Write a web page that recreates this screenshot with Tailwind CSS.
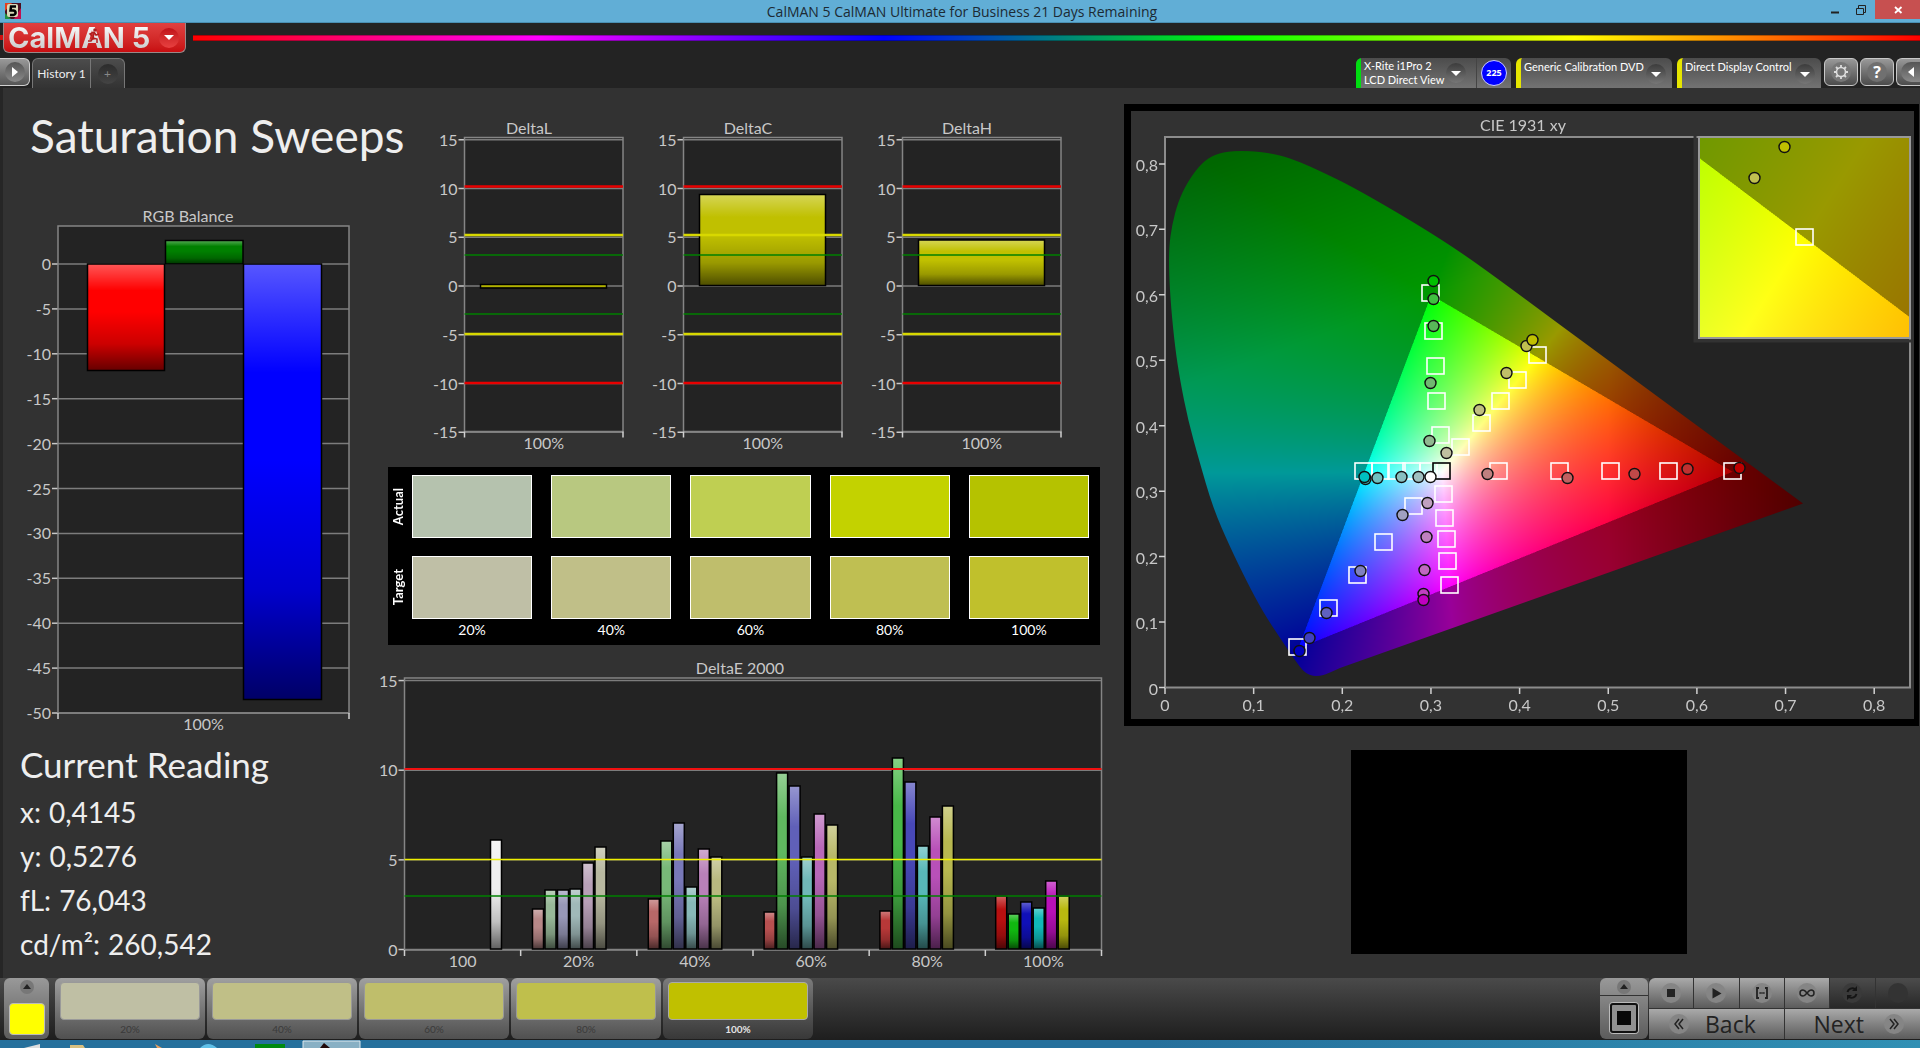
<!DOCTYPE html>
<html lang="en">
<head>
  <meta charset="UTF-8">
  <meta name="viewport" content="width=device-width, initial-scale=1.0">
  <title>CalMAN 5 CalMAN Ultimate for Business 21 Days Remaining</title>
  <script src="https://cdn.jsdelivr.net/npm/@tailwindcss/browser@4"></script>
</head>
<body class="min-h-screen flex flex-col overflow-x-hidden bg-[#323232] text-[#eeeeee] font-['Lato',sans-serif]">

  <!-- Window title bar -->
  <div class="flex h-[23px] shrink-0 items-start bg-[#61aed6] border-b border-[#4a8fb3] text-[#1c2a33]">
    <svg class="w-4 h-4 mt-[3px] ml-[5px]" viewBox="0 0 16 16">
      <rect width="16" height="16" fill="#4a1020"/>
      <path d="M0 0h7L0 8z" fill="#e04020"/><path d="M16 5v11H9z" fill="#c01050"/><path d="M0 16v-6l6 6z" fill="#209040"/>
      <rect x="2" y="1" width="11" height="13" rx="2" fill="#d8d8b8"/>
      <path d="M11 3.500H6L5.500 7.500H8.500Q11 8 10.500 10.500Q9.500 12.500 5 12" fill="none" stroke="#000" stroke-width="2.500"/>
    </svg>
    <h1 class="flex-1 pl-[82px] text-center text-sm leading-6 font-['Open_Sans',sans-serif]">CalMAN 5 CalMAN Ultimate for Business 21 Days Remaining</h1>
    <button class="w-7 h-5 flex items-center justify-center" aria-label="Minimize">
      <svg class="w-3 h-3" viewBox="0 0 12 12"><path d="M2 8.500h8" stroke="#222" stroke-width="2"/></svg>
    </button>
    <button class="w-6 h-5 mr-0.5 flex items-center justify-center" aria-label="Restore">
      <svg class="w-3 h-3" viewBox="0 0 12 12"><path d="M1.500 4.500h7v6h-7zM3.500 4V1.500h7v7H9" fill="none" stroke="#222"/></svg>
    </button>
    <button class="w-[45px] h-[19px] flex items-center justify-center bg-[#c75050]" aria-label="Close">
      <svg class="w-3 h-3" viewBox="0 0 12 12"><path d="M3 3l6.500 6M9.500 3L3 9" stroke="#fff" stroke-width="1.800"/></svg>
    </button>
  </div>

  <!-- Application header -->
  <header class="h-[65px] shrink-0 bg-[#232323] flex flex-col justify-between">
    <div class="flex items-start">
      <div class="w-[3px] h-[5px] mt-3 bg-[#d01010]"></div>
      <button class="flex w-[183px] h-[30px] items-center rounded-b-md border border-t-0 border-[#9a8888] bg-linear-to-b from-[#e04040] to-[#c80c10] pl-1 pr-1.5">
        <span class="relative text-[29px] leading-[30px] font-bold font-['Inter',sans-serif] whitespace-nowrap bg-linear-to-b from-white to-[#c4c4c4] bg-clip-text text-transparent">CalMAN 5
          <svg class="absolute left-[78px] top-1 w-4 h-5" viewBox="0 0 16 20"><circle cx="9" cy="3" r="1.800" fill="#b02020"/><path d="M8 5l-4 2 2 2M8 5l2 3 3-1M8 6l-1 5 4 1 0 4M7 11l-2 3-3 0" fill="none" stroke="#b02020" stroke-width="1.500"/></svg>
        </span>
        <span class="ml-auto flex w-5 h-5 items-center justify-center rounded-full bg-linear-to-b from-[#c01018] to-[#e84040]">
          <svg class="w-[10px] h-[5px]" viewBox="0 0 10 5"><path d="M0 0h10L5 5z" fill="#fff"/></svg>
        </span>
      </button>
      <div class="flex-1 h-[6px] mt-3 ml-[7px] border-y border-black/30 bg-[linear-gradient(to_right,#ff0000,#ff00ff_20%,#0000ff_40%,#00ff00_60%,#ffff00_80%,#ff0000)]"></div>
    </div>
    <div class="flex items-end text-[12px]">
      <button class="flex w-[30px] h-7 mb-0.5 items-center justify-center rounded-r-md border border-l-0 border-[#d0d0d0] bg-linear-to-b from-[#999] to-[#555]" aria-label="Show panel">
        <span class="flex w-5 h-5 items-center justify-center rounded-full bg-linear-to-b from-[#555] to-[#8a8a8a]"><svg class="w-[6px] h-[10px]" viewBox="0 0 6 10"><path d="M0 0l6 5-6 5z" fill="#fff"/></svg></span>
      </button>
      <div class="flex h-[30px] ml-0.5 rounded-t-md border border-b-0 border-[#777] bg-linear-to-b from-[#4c4c4c] to-[#333]">
        <button class="w-[58px] border-r border-[#777] text-[#eee] whitespace-nowrap">History 1</button>
        <button class="w-[33px] flex items-center justify-center" aria-label="Add history"><span class="flex w-5 h-5 items-center justify-center rounded-full bg-linear-to-b from-[#2c2c2c] to-[#444] text-[#888]">+</span></button>
      </div>

      <div class="flex items-end ml-auto text-[11px] leading-[14px] text-white">
        <div class="flex w-[155px] h-[30px] mr-[5px] rounded-t-md overflow-hidden bg-linear-to-b from-[#4c4c4c] to-[#737373]">
          <button class="flex flex-1 items-center border-r border-[#444] border-l-[5px] border-l-[#00dd10] pl-[3px]">
            <span class="flex-1 text-left whitespace-nowrap">X-Rite i1Pro 2<br>LCD Direct View</span>
            <span class="flex w-5 h-5 mr-2.5 items-center justify-center rounded-full bg-linear-to-b from-[#3c3c3c] to-[#777]"><svg class="w-[10px] h-[5px]" viewBox="0 0 10 5"><path d="M0 0h10L5 5z" fill="#fff"/></svg></span>
          </button>
          <div class="w-[34px] flex items-center justify-center"><span class="w-[26px] h-[26px] rounded-full border border-[#ccccff] bg-[#0000ff] text-center text-[9px] leading-6 font-bold font-['Open_Sans',sans-serif]">225</span></div>
        </div>
        <button class="flex w-[156px] h-[30px] mr-[5px] rounded-t-md overflow-hidden border-l-[5px] border-[#e6e600] bg-linear-to-b from-[#4c4c4c] to-[#737373] pl-[3px] pt-0.5">
          <span class="flex-1 text-left whitespace-nowrap">Generic Calibration DVD</span>
          <span class="flex w-5 h-5 mt-1 mr-1.5 items-center justify-center rounded-full bg-linear-to-b from-[#3c3c3c] to-[#777]"><svg class="w-[10px] h-[5px]" viewBox="0 0 10 5"><path d="M0 0h10L5 5z" fill="#fff"/></svg></span>
        </button>
        <button class="flex w-[144px] h-[30px] mr-[3px] rounded-t-md overflow-hidden border-l-[5px] border-[#e6e600] bg-linear-to-b from-[#4c4c4c] to-[#737373] pl-[3px] pt-0.5">
          <span class="flex-1 text-left whitespace-nowrap">Direct Display Control</span>
          <span class="flex w-5 h-5 mt-1 mr-1.5 items-center justify-center rounded-full bg-linear-to-b from-[#3c3c3c] to-[#777]"><svg class="w-[10px] h-[5px]" viewBox="0 0 10 5"><path d="M0 0h10L5 5z" fill="#fff"/></svg></span>
        </button>
        <button class="flex w-[34px] h-7 mb-0.5 mr-0.5 items-center justify-center rounded-md border border-[#c8c8c8] bg-linear-to-b from-[#999] to-[#4c4c4c]" aria-label="Settings">
          <svg class="w-5 h-5" viewBox="0 0 20 20"><circle cx="10" cy="10" r="10" fill="#777"/><circle cx="10" cy="10" r="4.500" fill="none" stroke="#ddd" stroke-width="1.600"/><path d="M10 3v2.500M10 14.500V17M3 10h2.500M14.500 10H17M5 5l2 2M13 13l2 2M15 5l-2 2M7 13l-2 2" stroke="#ddd" stroke-width="1.800"/></svg>
        </button>
        <button class="flex w-[34px] h-7 mb-0.5 mr-0.5 items-center justify-center rounded-md border border-[#c8c8c8] bg-linear-to-b from-[#999] to-[#4c4c4c]" aria-label="Help">
          <span class="w-5 h-5 rounded-full bg-[#707070] text-center text-base leading-5 font-bold font-['Open_Sans',sans-serif]">?</span>
        </button>
        <button class="flex w-[24px] h-7 mb-0.5 items-center justify-end overflow-hidden rounded-l-md border border-r-0 border-[#c8c8c8] bg-linear-to-b from-[#999] to-[#4c4c4c]" aria-label="Collapse">
          <span class="flex w-[19px] h-5 items-center justify-center rounded-l-full bg-linear-to-b from-[#555] to-[#8a8a8a]"><svg class="w-[6px] h-[10px]" viewBox="0 0 6 10"><path d="M6 0L0 5l6 5z" fill="#fff"/></svg></span>
        </button>
      </div>
    </div>
  </header>

  <main class="flex-1 grid grid-cols-[minmax(0,380fr)_minmax(0,725fr)_minmax(0,815fr)] shadow-[inset_3px_0_#262626]">

    <!-- Left: title, RGB balance, current reading -->
    <section class="px-5 pb-2">
      <h2 class="pl-2.5 pt-5 text-[46px] leading-[56px] whitespace-nowrap">Saturation Sweeps</h2>
      <svg id="rgb-balance" class="block w-full mt-9" viewBox="0 0 340 540"></svg>
      <h3 class="mt-0.5 text-[35px] leading-[44px] whitespace-nowrap">Current Reading</h3>
      <dl class="mt-1 text-[28px] leading-[44px]">
        <div class="flex gap-2"><dt>x:</dt><dd>0,4145</dd></div>
        <div class="flex gap-2"><dt>y:</dt><dd>0,5276</dd></div>
        <div class="flex gap-2"><dt>fL:</dt><dd>76,043</dd></div>
        <div class="flex gap-2"><dt>cd/m²:</dt><dd>260,542</dd></div>
      </dl>
    </section>

    <!-- Middle: delta charts, comparator, DeltaE -->
    <section class="pt-[30px]">
      <div class="grid grid-cols-3 pl-[50px] pr-[18px]">
        <svg id="delta-l" class="block w-full" viewBox="0 0 219 340"></svg>
        <svg id="delta-c" class="block w-full" viewBox="0 0 219 340"></svg>
        <svg id="delta-h" class="block w-full" viewBox="0 0 219 340"></svg>
      </div>
      <div class="mt-[9px] ml-2 mr-[5px] bg-black pt-2 pb-1 pr-[11px] text-white">
        <div class="flex">
          <div class="w-6 flex items-center pl-0.5"><span class="[writing-mode:vertical-rl] rotate-180 text-[13px] leading-4 font-bold">Actual</span></div>
          <div class="flex-1 grid grid-cols-5 gap-x-[19px]">
            <div class="h-[63px] border border-white bg-[#b5c2ae]"></div>
            <div class="h-[63px] border border-white bg-[#b8c880]"></div>
            <div class="h-[63px] border border-white bg-[#bfcf52]"></div>
            <div class="h-[63px] border border-white bg-[#c3d200]"></div>
            <div class="h-[63px] border border-white bg-[#b5c200]"></div>
          </div>
        </div>
        <div class="flex mt-[18px]">
          <div class="w-6 flex items-center pl-0.5"><span class="[writing-mode:vertical-rl] rotate-180 text-[13px] leading-4 font-bold">Target</span></div>
          <div class="flex-1 grid grid-cols-5 gap-x-[19px]">
            <div class="h-[63px] border border-white bg-[#bfbfa6]"></div>
            <div class="h-[63px] border border-white bg-[#c0bf88]"></div>
            <div class="h-[63px] border border-white bg-[#bfbe6c]"></div>
            <div class="h-[63px] border border-white bg-[#bfbf52]"></div>
            <div class="h-[63px] border border-white bg-[#c0c02c]"></div>
          </div>
        </div>
        <div class="grid grid-cols-5 gap-x-[19px] pl-6 text-center text-[14px] leading-[22px]">
          <span>20%</span><span>40%</span><span>60%</span><span>80%</span><span>100%</span>
        </div>
      </div>
      <svg id="delta-e" class="block w-full mt-[5px]" viewBox="0 0 725 326"></svg>
    </section>

    <!-- Right: chromaticity diagram and pattern preview -->
    <section class="pl-[19px] pr-px pt-4">
      <div class="relative border-[7px] border-r-[5px] border-black">
        <canvas id="cie-fill" class="block w-full" width="1566" height="1216"></canvas>
        <svg id="cie" class="absolute inset-0 w-full h-full" viewBox="0 0 783 608"></svg>
      </div>
      <div class="mt-6 pr-1.5">
        <div class="mx-auto w-[336px] h-[204px] bg-black"></div>
      </div>
    </section>
  </main>

  <!-- Pattern strip and workflow controls -->
  <footer class="flex h-[62px] shrink-0 bg-linear-to-b from-[#4a4a4a] to-[#1e1e1e] pb-px">
    <button class="flex flex-col items-center justify-between w-[45px] ml-1 rounded-md bg-linear-to-b from-[#999] to-[#5c5c5c] pt-0.5 pb-1" aria-label="Current colour">
      <svg class="w-[14px] h-[14px]" viewBox="0 0 14 14"><circle cx="7" cy="7" r="7" fill="#777"/><path d="M3 9l4-5 4 5z" fill="#222"/></svg>
      <span class="w-9 h-8 rounded-sm border border-[#bbb] bg-[#ffff00]"></span>
    </button>
    <div class="flex gap-0.5 ml-1.5 text-[10px] leading-[14px] text-[#3a3a3a]">
      <button class="w-[150px] rounded-md bg-linear-to-b from-[#a0a0a0] to-[#505050] px-[5px] pt-1 pb-1"><span class="block h-[38px] mb-0.5 rounded-sm border border-[#999] bg-[#bfbfa4]"></span>20%</button>
      <button class="w-[150px] rounded-md bg-linear-to-b from-[#a0a0a0] to-[#505050] px-[5px] pt-1 pb-1"><span class="block h-[38px] mb-0.5 rounded-sm border border-[#999] bg-[#c0bf87]"></span>40%</button>
      <button class="w-[150px] rounded-md bg-linear-to-b from-[#a0a0a0] to-[#505050] px-[5px] pt-1 pb-1"><span class="block h-[38px] mb-0.5 rounded-sm border border-[#999] bg-[#bfbe6b]"></span>60%</button>
      <button class="w-[150px] rounded-md bg-linear-to-b from-[#a0a0a0] to-[#505050] px-[5px] pt-1 pb-1"><span class="block h-[38px] mb-0.5 rounded-sm border border-[#999] bg-[#bfbf4c]"></span>80%</button>
      <button class="w-[150px] rounded-md bg-linear-to-b from-[#7c7c7c] to-[#383838] px-[5px] pt-1 pb-1 font-bold text-[#e4e4e4]"><span class="block h-[38px] mb-0.5 rounded-sm border border-[#aaa] bg-[#c0c000]"></span>100%</button>
    </div>
    <button class="flex flex-col items-center w-12 ml-auto mr-px rounded-md bg-linear-to-b from-[#999] to-[#5c5c5c]" aria-label="Pattern window">
      <span class="flex w-full h-[18px] items-center justify-center border-b border-[#333]"><svg class="w-[14px] h-[14px]" viewBox="0 0 14 14"><circle cx="7" cy="7" r="7" fill="#777"/><path d="M3 9l4-5 4 5z" fill="#222"/></svg></span>
      <svg class="w-8 h-[34px] mt-[5px]" viewBox="0 0 32 34"><rect x="1.500" y="1.500" width="29" height="31" rx="3" fill="#999" stroke="#bbb"/><rect x="3" y="3" width="26" height="28" rx="2" fill="#909090" stroke="#111" stroke-width="2"/><rect x="9" y="10" width="14" height="14" fill="#080808"/></svg>
    </button>
    <div class="grid grid-cols-6 grid-rows-2 gap-px w-[271px] bg-[#333] overflow-hidden">
      <button class="flex items-center justify-center bg-linear-to-b from-[#aaa] to-[#5c5c5c] rounded-tl-md" aria-label="Stop"><svg class="w-5 h-5" viewBox="0 0 20 20"><circle cx="10" cy="10" r="10" fill="#858585"/><path d="M6 6h8v8H6z" fill="#222"/></svg></button>
      <button class="flex items-center justify-center bg-linear-to-b from-[#aaa] to-[#5c5c5c]" aria-label="Play"><svg class="w-5 h-5" viewBox="0 0 20 20"><circle cx="10" cy="10" r="10" fill="#858585"/><path d="M6.500 5l9 5.500-9 5z" fill="#222"/></svg></button>
      <button class="flex items-center justify-center bg-linear-to-b from-[#aaa] to-[#5c5c5c]" aria-label="Read series"><svg class="w-5 h-5" viewBox="0 0 20 20"><circle cx="10" cy="10" r="10" fill="#858585"/><path d="M7 5H5v10h2M13 5h2v10h-2" fill="none" stroke="#222" stroke-width="1.800"/><path d="M7.500 10h5" stroke="#222" stroke-width="2" stroke-dasharray="1.200 .7"/></svg></button>
      <button class="flex items-center justify-center bg-linear-to-b from-[#aaa] to-[#5c5c5c]" aria-label="Read continuously"><svg class="w-5 h-5" viewBox="0 0 20 20"><circle cx="10" cy="10" r="10" fill="#858585"/><path d="M10 10C8 7.500 7 7 6 7a3 3 0 0 0 0 6c1 0 2-.5 4-3s3-3 4-3a3 3 0 0 1 0 6c-1 0-2-.5-4-3z" fill="none" stroke="#222" stroke-width="1.500"/></svg></button>
      <button class="flex items-center justify-center bg-linear-to-b from-[#4c4c4c] to-[#282828]" aria-label="Refresh" disabled><svg class="w-5 h-5" viewBox="0 0 20 20"><circle cx="10" cy="10" r="10" fill="#3a3a3a"/><path d="M5.500 9A5 5 0 0 1 13 6M14.500 11A5 5 0 0 1 7 14" fill="none" stroke="#151515" stroke-width="2"/><path d="M15 3v5h-5zM5 17v-5h5z" fill="#151515"/></svg></button>
      <button class="flex items-center justify-center bg-linear-to-b from-[#4c4c4c] to-[#282828]" aria-label="Record" disabled><svg class="w-5 h-5" viewBox="0 0 20 20"><circle cx="10" cy="10" r="10" fill="#333"/></svg></button>
      <button class="col-span-3 flex items-center gap-4 pl-5 bg-linear-to-b from-[#aaa] to-[#5c5c5c] text-[23px] leading-[28px] text-[#222] font-['Open_Sans',sans-serif]"><svg class="w-5 h-5" viewBox="0 0 20 20"><circle cx="10" cy="10" r="10" fill="#858585"/><path d="M10 5l-4 5 4 5M14 5l-4 5 4 5" fill="none" stroke="#222" stroke-width="1.500"/></svg>Back</button>
      <button class="col-span-3 flex items-center justify-end gap-5 pr-4 bg-linear-to-b from-[#aaa] to-[#5c5c5c] text-[23px] leading-[28px] text-[#222] font-['Open_Sans',sans-serif]">Next<svg class="w-5 h-5" viewBox="0 0 20 20"><circle cx="10" cy="10" r="10" fill="#858585"/><path d="M6 5l4 5-4 5M10 5l4 5-4 5" fill="none" stroke="#222" stroke-width="1.500"/></svg></button>
    </div>
  </footer>

  <!-- Top edge of the desktop taskbar -->
  <div class="h-2 shrink-0 overflow-hidden bg-linear-to-r from-[#26709c] via-[#26709c] via-60% to-[#3190b4]">
    <svg class="block w-[380px] h-2" viewBox="0 0 380 8"><path d="M24 8l16-4v4z" fill="#ddd"/><path d="M70 5h13l2 3H70z" fill="#d9c080"/><path d="M155 4l7 4h-5z" fill="#e8a060"/><path d="M200 8q8-8 17 0z" fill="#60c0e8"/><rect x="255" y="4" width="30" height="4" fill="#008a10"/><path d="M303 8V1h57v7" fill="#88b0c4" stroke="#dde8ee"/><path d="M320 8l4-5 6 5z" fill="#200808"/></svg>
  </div>

  <script>
    const NS = 'http://www.w3.org/2000/svg';

    function add(parent, tag, attrs, text) {
      const el = document.createElementNS(NS, tag);
      for (const key in attrs) el.setAttribute(key, attrs[key]);
      if (text !== undefined) el.textContent = text;
      parent.appendChild(el);
      return el;
    }

    function label(svg, x, y, text, anchor = 'middle') {
      add(svg, 'text', { x, y, 'text-anchor': anchor, 'font-size': 16, fill: '#c8c8c8' }, text);
    }

    // Light on top, dark at the foot; laid over every bar
    function addShine(svg) {
      const gradient = add(add(svg, 'defs', {}), 'linearGradient', { id: svg.id + '-shine', x1: 0, y1: 0, x2: 0, y2: 1 });
      [[0, '#fff', 0.34], [0.25, '#fff', 0], [0.45, '#000', 0], [0.75, '#000', 0.2], [1, '#000', 0.6]].forEach(([offset, color, opacity]) => {
        add(gradient, 'stop', { offset, 'stop-color': color, 'stop-opacity': opacity });
      });
    }

    function drawChart(id, c) {
      const svg = document.getElementById(id);
      const [left, top, right, bottom] = c.plot;
      const yOf = value => c.zero - value * c.unit;
      addShine(svg);

      add(svg, 'rect', { x: left, y: top, width: right - left, height: bottom - top, fill: '#232323' });
      for (let v = c.min; v <= c.max; v += 5) {
        add(svg, 'path', { d: `M${left} ${yOf(v)}H${right}`, stroke: '#7c7c7c', 'stroke-width': 1.5 });
        add(svg, 'path', { d: `M${left - 6} ${yOf(v)}H${left}`, stroke: '#c8c8c8', 'stroke-width': 1.5 });
        label(svg, left - 7, yOf(v) + 6, v, 'end');
      }
      add(svg, 'rect', { x: left, y: top, width: right - left, height: bottom - top, fill: 'none', stroke: '#858585', 'stroke-width': 1.5 });

      c.bars.forEach(([x, width, y1, y2, color]) => {
        add(svg, 'rect', { x, y: y1, width, height: y2 - y1, fill: color });
        add(svg, 'rect', { x, y: y1, width, height: y2 - y1, fill: `url(#${id}-shine)`, stroke: '#000', 'stroke-width': 1.5 });
      });
      (c.limits || []).forEach(([y, color, width]) => {
        add(svg, 'path', { d: `M${left} ${y}H${right}`, stroke: color, 'stroke-width': width });
      });

      const step = (right - left) / c.categories.length;
      c.categories.forEach((name, i) => label(svg, left + step * (i + 0.5), bottom + 17, name));
      for (let i = 0; i <= c.categories.length; i++) {
        add(svg, 'path', { d: `M${left + step * i} ${bottom}v6`, stroke: '#d0d0d0', 'stroke-width': 1.5 });
      }
      label(svg, c.titleX, top - 4, c.title);
    }

    drawChart('rgb-balance', {
      title: 'RGB Balance', titleX: 168, plot: [38, 26, 329, 513], zero: 64, unit: 8.98, min: -50, max: 0,
      categories: ['100%'],
      bars: [[67.5, 77, 64, 170.5, '#ff0000'], [145.5, 77.5, 40.5, 64, '#008000'], [223.5, 78, 64, 499.5, '#0000ff']]
    });

    const limits = [[68.5, '#e80000', 2.5], [117, '#d8d800', 2.5], [137, '#008000', 1.5], [196, '#008000', 1.5], [216, '#d8d800', 2.5], [265, '#e80000', 2.5]];
    const deltaBars = { l: [166.5, 170], c: [76.5, 167.5], h: [122, 167.5] };
    ['l', 'c', 'h'].forEach(key => drawChart('delta-' + key, {
      title: 'Delta' + key.toUpperCase(), titleX: 99, plot: [34.5, 19.5, 193, 313.5], zero: 168, unit: 9.75, min: -15, max: 15,
      categories: ['100%'], limits,
      bars: [[50.5, 126, deltaBars[key][0], deltaBars[key][1], '#c0c000']]
    }));

    // Bar tops per saturation level: red, green, blue, cyan, magenta, yellow
    const sweeps = [
      { tops: [259, 240, 240, 239, 213, 197], colors: ['#b88888', '#98b898', '#9898b8', '#a0b8b8', '#b8a0b8', '#b8b8a0'] },
      { tops: [249, 191, 173, 237, 199, 207], colors: ['#b86868', '#78b878', '#7878b8', '#88b8b8', '#b880b8', '#b8b880'] },
      { tops: [262, 123, 136, 207, 164, 175], colors: ['#b85050', '#60b860', '#6060b8', '#70b8b8', '#b868b8', '#b8b868'] },
      { tops: [261, 108, 132, 196, 167, 156], colors: ['#b83838', '#48b848', '#4848b8', '#58b8b8', '#b850b8', '#b8b850'] },
      { tops: [246, 264, 252, 258, 231, 246], colors: ['#b81010', '#10b810', '#1010b8', '#10b8b8', '#b810b8', '#b8b810'] }
    ];
    const sweepBars = [[110.5, 11, 190, 299, '#f0f0f0']];
    sweeps.forEach((sweep, i) => sweep.tops.forEach((y, j) => {
      sweepBars.push([152.5 + i * 115.8 + j * 12.5, 11, y, 299, sweep.colors[j]]);
    }));
    drawChart('delta-e', {
      title: 'DeltaE 2000', titleX: 360, plot: [24.5, 28, 721.5, 300], zero: 299.5, unit: 17.93, min: 0, max: 15,
      categories: ['100', '20%', '40%', '60%', '80%', '100%'],
      limits: [[119, '#f01010', 2], [209.5, '#f0f000', 1.5], [246, '#008000', 1.5]],
      bars: sweepBars
    });

    // ---- CIE 1931 diagram ----
    const px = x => 34 + x * 886.5;
    const py = y => 576.5 - y * 654.5;

    function cross(ax, ay, bx, by, x, y) { return (bx - ax) * (y - ay) - (by - ay) * (x - ax); }

    function chromaColor(x, y) {
      const X = x / y, Z = (1 - x - y) / y;
      let rgb = [3.2406 * X - 1.5372 - 0.4986 * Z, -0.9689 * X + 1.8758 + 0.0415 * Z, 0.0557 * X - 0.204 + 1.057 * Z];
      const peak = Math.max(...rgb);
      rgb = rgb.map(v => Math.pow(Math.max(v, 0) / peak, 0.85));
      const inside = cross(0.64, 0.33, 0.3, 0.6, x, y) > 0 && cross(0.3, 0.6, 0.15, 0.06, x, y) > 0 && cross(0.15, 0.06, 0.64, 0.33, x, y) > 0;
      let level = inside ? 255 : 153;
      const green = Math.min(Math.max((y - 0.6 + (0.3 - x) * 0.5) / 0.33, 0), 1);
      const red = Math.min(Math.max((x - 0.5) / 0.22, 0), 1);
      level *= (1 - 0.33 * green) * (1 - 0.48 * red);
      return rgb.map(v => v * level);
    }

    function chromaImage(width, height, toX, toY) {
      const buffer = document.createElement('canvas');
      buffer.width = width;
      buffer.height = height;
      const context = buffer.getContext('2d');
      const image = context.createImageData(width, height);
      for (let j = 0; j < height; j++) {
        for (let i = 0; i < width; i++) {
          const k = (j * width + i) * 4;
          const [r, g, b] = chromaColor(toX(i), Math.max(toY(j), 0.001));
          image.data[k] = r; image.data[k + 1] = g; image.data[k + 2] = b; image.data[k + 3] = 255;
        }
      }
      context.putImageData(image, 0, 0);
      return buffer;
    }

    const locus = [[209, 557], [196, 563], [189, 565], [181, 565], [173, 561], [166, 552], [149, 527], [132, 501], [116, 471], [99, 436], [82, 397], [68, 349], [57, 309], [49, 269], [44, 236], [40, 196], [38, 162], [38, 136], [41, 114], [47, 91], [56, 72], [68, 55], [80, 45], [97, 40], [124, 40], [149, 44], [169, 51], [189, 60], [222, 76], [279, 109], [322, 136], [359, 162], [432, 216]];
    const ctx = document.getElementById('cie-fill').getContext('2d');
    ctx.scale(2, 2);
    ctx.fillStyle = '#323232';
    ctx.fillRect(0, 0, 783, 608);
    ctx.fillStyle = '#232323';
    ctx.fillRect(34, 26, 745, 550);
    ctx.save();
    ctx.beginPath();
    ctx.moveTo(...locus[0]);
    for (let i = 1; i < locus.length - 1; i++) {
      const [x, y] = locus[i], [nx, ny] = locus[i + 1];
      ctx.quadraticCurveTo(x, y, (x + nx) / 2, (y + ny) / 2);
    }
    ctx.lineTo(432, 216);
    ctx.lineTo(672, 392.5);
    ctx.closePath();
    ctx.clip();
    ctx.drawImage(chromaImage(1566, 1216, i => (i / 2 - 34) / 886.5, j => (576.5 - j / 2) / 654.5), 0, 0, 783, 608);
    ctx.restore();

    const cie = document.getElementById('cie');
    add(cie, 'rect', { x: 34, y: 26, width: 745, height: 550.5, fill: 'none', stroke: '#8c8c8c', 'stroke-width': 2 });
    for (let i = 0; i <= 8; i++) {
      const name = i ? '0,' + i : '0';
      add(cie, 'path', { d: `M${px(i / 10)} 577v6M28 ${py(i / 10)}h6`, stroke: '#d0d0d0', 'stroke-width': 1.5 });
      label(cie, px(i / 10), 600, name);
      label(cie, 27, py(i / 10) + 7, name, 'end');
    }
    label(cie, 392, 20, 'CIE 1931 xy');

    const target = (x, y, color = '#fff') => add(cie, 'rect', { x: x - 8, y: y - 8, width: 17, height: 16, fill: 'none', stroke: color, 'stroke-width': 1.6 });
    const reading = (x, y, color) => add(cie, 'circle', { cx: x + 0.5, cy: y, r: 5.5, fill: color, stroke: '#111', 'stroke-width': 1.4 });

    [[232, 360], [249, 360], [265, 360], [280, 360], [297, 360],
     [309, 324], [305, 290], [304, 255], [302, 220], [299, 182],
     [329, 336], [350, 312], [369, 290], [386, 269], [406, 244],
     [312, 383], [313, 407], [315, 428], [316, 450], [318, 474],
     [282, 395], [252, 431], [226, 464], [197, 497], [166, 536],
     [367, 360], [428, 360], [479, 360], [537, 360], [601, 360]].forEach(p => target(...p));
    target(310, 360, '#000');

    [[298, 330, '#90b890'], [299, 272, '#70b870'], [302, 215, '#58b858'], [302, 188, '#40c040'], [302, 170, '#00c000'],
     [315, 342, '#c0c0a0'], [348, 299, '#c0c080'], [375, 262, '#c0c068'], [395, 235, '#c0c050'], [401, 229, '#c0c000'],
     [287, 366, '#a0c0c0'], [270, 366, '#88c0c0'], [246, 367, '#70c0c0'], [234, 368, '#40c0c0'], [233, 366, '#00c0c0'], [299, 366, '#ffffff'],
     [296, 392, '#c0a0c0'], [295, 426, '#c080c0'], [293, 459, '#c068c0'], [292, 483, '#c040c0'], [292, 489, '#c000c0'],
     [271, 404, '#a0a0c0'], [229, 460, '#8080c0'], [195, 502, '#6060c0'], [178, 527, '#4040c0'], [168, 540, '#0000c0'],
     [356, 363, '#c08080'], [436, 367, '#c06060'], [503, 363, '#c04848'], [556, 358, '#c03030'], [608, 357, '#c00000']].forEach(p => reading(...p));

    // Magnified view around the selected target
    ctx.fillStyle = '#323232';
    ctx.fillRect(564, 24, 219, 206);
    ctx.drawImage(chromaImage(420, 400, i => 0.4193 + (i / 420 - 0.5) * 0.05, j => 0.5053 + (0.5 - j / 400) * 0.05), 568, 26, 210, 200);
    add(cie, 'path', { d: 'M564 26v-3h219v207H564z', fill: 'none', stroke: '#323232', 'stroke-width': 3 });
    add(cie, 'rect', { x: 568, y: 26, width: 211, height: 201, fill: 'none', stroke: '#999', 'stroke-width': 2 });
    target(673, 126);
    reading(623, 67, '#c0c050');
    reading(653, 36, '#c0c000');
  </script>
</body>
</html>
